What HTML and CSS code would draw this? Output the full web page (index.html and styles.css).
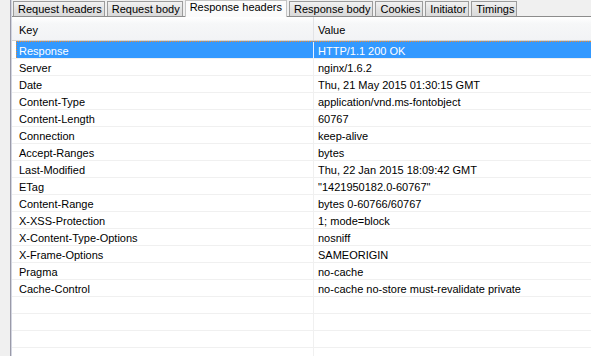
FILE: index.html
```html
<!DOCTYPE html>
<html>
<head>
<meta charset="utf-8">
<link rel="stylesheet" href="styles.css">
</head>
<body>
<div class="app">
  <div class="gutter"></div>
  <div class="frame">
    <div class="frame-inner">
      <div class="tabs">
        <div class="tab">Request headers</div>
        <div class="tab">Request body</div>
        <div class="tab active">Response headers</div>
        <div class="tab">Response body</div>
        <div class="tab">Cookies</div>
        <div class="tab">Initiator</div>
        <div class="tab">Timings</div>
      </div>
      <div class="panel">
        <div class="head">
          <div class="pad"></div>
          <div class="cells">
            <div class="k">Key</div>
            <div class="v">Value</div>
          </div>
        </div>
        <div class="rows">
          <div class="row sel"><div class="pad"></div><div class="cells"><div class="k">Response</div><div class="v">HTTP/1.1 200 OK</div></div></div>
          <div class="row"><div class="pad"></div><div class="cells"><div class="k">Server</div><div class="v">nginx/1.6.2</div></div></div>
          <div class="row"><div class="pad"></div><div class="cells"><div class="k">Date</div><div class="v">Thu, 21 May 2015 01:30:15 GMT</div></div></div>
          <div class="row"><div class="pad"></div><div class="cells"><div class="k">Content-Type</div><div class="v">application/vnd.ms-fontobject</div></div></div>
          <div class="row"><div class="pad"></div><div class="cells"><div class="k">Content-Length</div><div class="v">60767</div></div></div>
          <div class="row"><div class="pad"></div><div class="cells"><div class="k">Connection</div><div class="v">keep-alive</div></div></div>
          <div class="row"><div class="pad"></div><div class="cells"><div class="k">Accept-Ranges</div><div class="v">bytes</div></div></div>
          <div class="row"><div class="pad"></div><div class="cells"><div class="k">Last-Modified</div><div class="v">Thu, 22 Jan 2015 18:09:42 GMT</div></div></div>
          <div class="row"><div class="pad"></div><div class="cells"><div class="k">ETag</div><div class="v">"1421950182.0-60767"</div></div></div>
          <div class="row"><div class="pad"></div><div class="cells"><div class="k">Content-Range</div><div class="v">bytes 0-60766/60767</div></div></div>
          <div class="row"><div class="pad"></div><div class="cells"><div class="k">X-XSS-Protection</div><div class="v">1; mode=block</div></div></div>
          <div class="row"><div class="pad"></div><div class="cells"><div class="k">X-Content-Type-Options</div><div class="v">nosniff</div></div></div>
          <div class="row"><div class="pad"></div><div class="cells"><div class="k">X-Frame-Options</div><div class="v">SAMEORIGIN</div></div></div>
          <div class="row"><div class="pad"></div><div class="cells"><div class="k">Pragma</div><div class="v">no-cache</div></div></div>
          <div class="row"><div class="pad"></div><div class="cells"><div class="k">Cache-Control</div><div class="v">no-cache no-store must-revalidate private</div></div></div>
          <div class="row"><div class="pad"></div><div class="cells"><div class="k"></div><div class="v"></div></div></div>
          <div class="row"><div class="pad"></div><div class="cells"><div class="k"></div><div class="v"></div></div></div>
          <div class="row"><div class="pad"></div><div class="cells"><div class="k"></div><div class="v"></div></div></div>
          <div class="row"><div class="pad"></div><div class="cells"><div class="k"></div><div class="v"></div></div></div>
        </div>
      </div>
    </div>
  </div>
</div>
</body>
</html>
```

FILE: styles.css
```css
html, body {
  margin: 0;
  padding: 0;
  background: #f0f0f0;
  font-family: "Liberation Sans", Arial, sans-serif;
  font-size: 11px;
  color: #000;
  overflow: hidden;
}

.app {
  display: flex;
  width: 591px;
  height: 356px;
  overflow: hidden;
}

.gutter {
  width: 10px;
  flex: none;
  background: #f0f0f0;
}

.frame {
  flex: 1;
  border-left: 1px solid #9a9aa8;
  display: flex;
  min-width: 0;
}

.frame-inner {
  flex: 1;
  border-left: 1px solid #d2d5e0;
  display: flex;
  flex-direction: column;
  min-width: 0;
}

.tabs {
  display: flex;
  align-items: flex-end;
  gap: 2px;
  height: 16px;
  padding-left: 1px;
  border-bottom: 1px solid #8c8c8c;
  background: #f0f0f0;
  flex: none;
}

.tab {
  height: 15px;
  box-sizing: border-box;
  padding: 0 2px 0 4px;
  border: 1px solid #9c9c9c;
  border-bottom: none;
  background: linear-gradient(#f2f2f2, #e3e3e3 50%, #dadada);
  line-height: 14px;
  white-space: nowrap;
}

.tab.active {
  height: 17px;
  margin: 0 0 -1px;
  padding: 0 4px 0 4px;
  background: #fbfbfb;
  border-color: #c4c4c4;
  line-height: 13px;
  z-index: 1;
}

.panel {
  flex: 1;
  background: #fff;
  overflow: hidden;
}

.head {
  display: flex;
  height: 23px;
  border-bottom: 1px solid #d5d5d5;
  background: linear-gradient(#ffffff, #f6f7f8 30%, #f2f3f5);
}

.head .cells {
  line-height: 26px;
}

.head .k {
  border-right: 1px solid #e2e3e6;
}

.pad {
  width: 5px;
  flex: none;
}

.cells {
  flex: 1;
  display: grid;
  grid-template-columns: 297px 1fr;
  min-width: 0;
}

.k {
  padding-left: 2px;
  white-space: nowrap;
  overflow: hidden;
}

.v {
  padding-left: 4px;
  white-space: nowrap;
  overflow: hidden;
}

.row {
  display: flex;
  height: 16px;
  border-bottom: 1px solid #f0f0f0;
}

.row .cells {
  line-height: 14px;
  padding-top: 2px;
  box-sizing: border-box;
}

.row .k {
  border-right: 1px solid #f0f0f0;
  margin-top: -2px;
  padding-top: 2px;
}

.row .v {
  margin-top: -2px;
  padding-top: 2px;
}

.row.sel {
  height: 17px;
}

.row.sel .cells {
  background: #3399ff;
  color: #fff;
  border-top: 1px dotted #f08a2c;
  border-left: 1px dotted #f08a2c;
  margin-left: -1px;
}

.row.sel .k {
  border-right-color: #e8f2ff;
  padding-left: 2px;
}
```
